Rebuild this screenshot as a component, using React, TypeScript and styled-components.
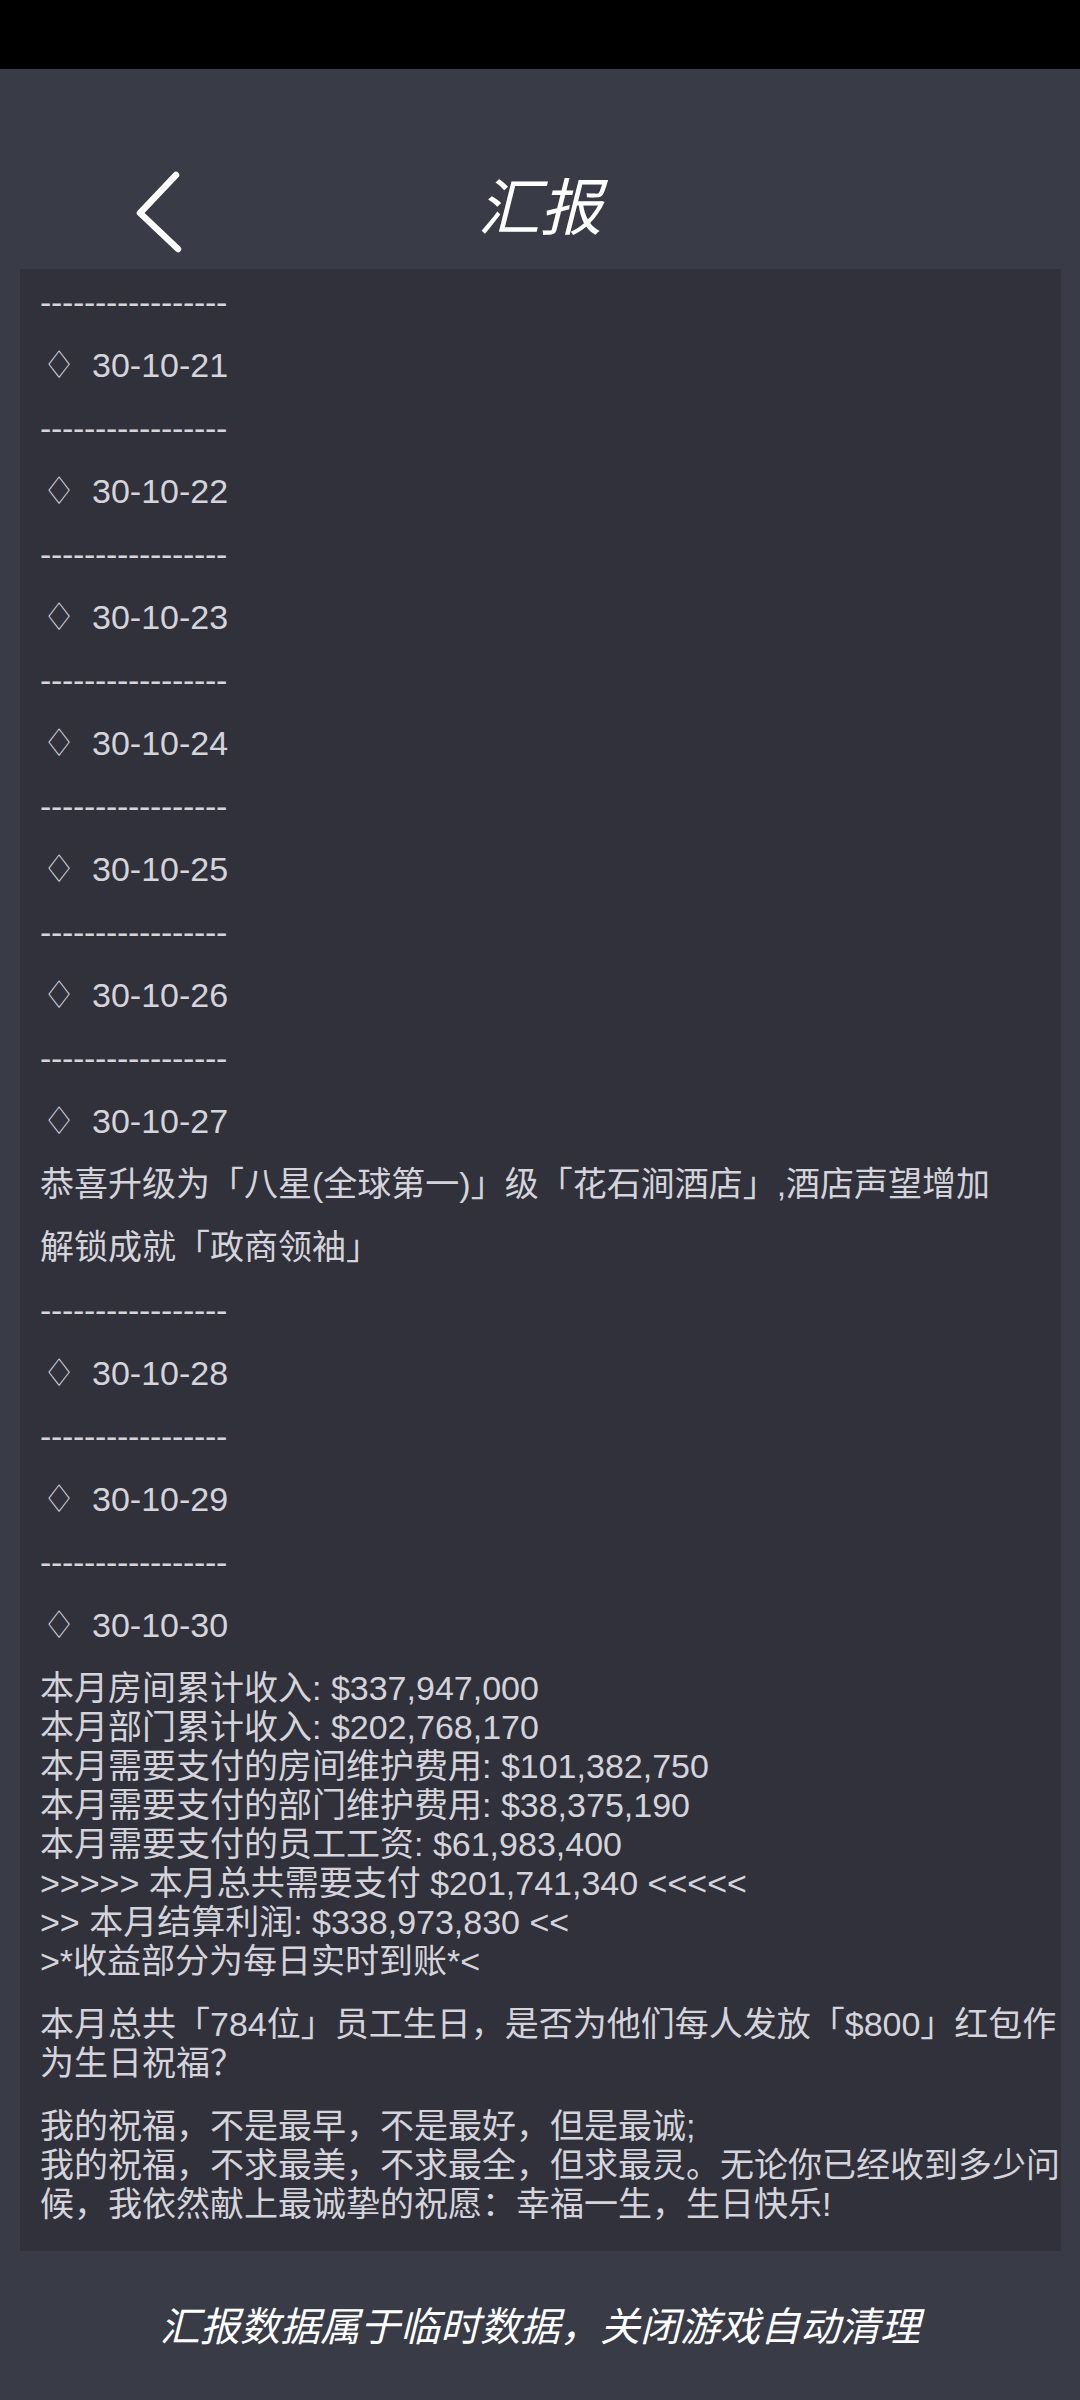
import * as React from 'react';
import styled, { createGlobalStyle } from 'styled-components';

const GlobalStyle = createGlobalStyle`
  html, body {
    margin: 0;
    padding: 0;
    background: #393c47;
  }
  body {
    font-family: "Liberation Sans", "Noto Sans CJK SC", sans-serif;
  }
`;

const dates = ['30-10-21', '30-10-22', '30-10-23', '30-10-24', '30-10-25', '30-10-26', '30-10-27'];

const summary = [
    '本月房间累计收入: $337,947,000',
    '本月部门累计收入: $202,768,170',
    '本月需要支付的房间维护费用: $101,382,750',
    '本月需要支付的部门维护费用: $38,375,190',
    '本月需要支付的员工工资: $61,983,400',
    '>>>>> 本月总共需要支付 $201,741,340 <<<<<',
    '>> 本月结算利润: $338,973,830 <<',
    '>*收益部分为每日实时到账*<',
];

const DASHES = '-----------------';

const DayHeader: React.FC<{ date: string }> = ({ date }) => (
    <>
        <Dashes>{DASHES}</Dashes>
        <Entry>
            <Diamond>♢</Diamond>
            {date}
        </Entry>
    </>
);

const App: React.FC = () => {
    return (
        <Screen>
            <GlobalStyle />
            <StatusBar />
            <Header>
                <BackButton aria-label="back">
                    <svg width="50" height="86" viewBox="0 0 50 86" fill="none">
                        <path d="M42 6 L6 44 L44 80" stroke="#fff" strokeWidth="6.5" strokeLinecap="round" strokeLinejoin="round" />
                    </svg>
                </BackButton>
                <Title>汇报</Title>
                <span />
            </Header>

            <Panel>
                {dates.map((d) => (
                    <DayHeader key={d} date={d} />
                ))}
                <Entry>恭喜升级为「八星(全球第一)」级「花石涧酒店」,酒店声望增加</Entry>
                <Entry>解锁成就「政商领袖」</Entry>
                <DayHeader date="30-10-28" />
                <DayHeader date="30-10-29" />
                <DayHeader date="30-10-30" />
                <Entry>
                    {summary.map((line) => (
                        <div key={line}>{line}</div>
                    ))}
                </Entry>
                <Entry>本月总共「784位」员工生日，是否为他们每人发放「$800」红包作为生日祝福？</Entry>
                <Entry>
                    我的祝福，不是最早，不是最好，但是最诚;
                    <br />
                    我的祝福，不求最美，不求最全，但求最灵。无论你已经收到多少问候，我依然献上最诚挚的祝愿：幸福一生，生日快乐!
                </Entry>
            </Panel>

            <Footer>汇报数据属于临时数据，关闭游戏自动清理</Footer>
        </Screen>
    );
};

const Screen = styled.div`
    width: 1080px;
    min-height: 2400px;
    background: #393c47;
    display: flex;
    flex-direction: column;
`;

const StatusBar = styled.div`
    height: 69px;
    background: #000;
`;

const Header = styled.div`
    height: 124px;
    padding-top: 76px;
    display: grid;
    grid-template-columns: 1fr auto 1fr;
    align-items: center;
`;

const BackButton = styled.button`
    background: none;
    border: none;
    padding: 0 0 0 134px;
    display: flex;
    align-items: center;
    justify-self: start;
    margin-top: 10px;
`;

const Title = styled.h1`
    margin: 4px 0 0;
    color: #fff;
    font-size: 62px;
    font-weight: 400;
    font-style: italic;
    line-height: 1;
`;

const Panel = styled.div`
    margin: 0 19px 0 20px;
    padding: 14px 0 27px 20px;
    background: #31313c;
    display: flex;
    flex-direction: column;
    gap: 24px;
    color: #d4d4da;
    font-size: 34px;
    line-height: 39px;
`;

const Entry = styled.div`
    display: block;
`;

const Dashes = styled.div`
    letter-spacing: -0.33px;
`;

const Diamond = styled.span`
    display: inline-block;
    font-family: "DejaVu Sans", sans-serif;
    font-size: 38px;
    line-height: 39px;
    width: 50px;
    padding-left: 2px;
    vertical-align: top;
    font-weight: 300;
`;

const Footer = styled.div`
    padding-top: 53px;
    text-align: center;
    color: #fff;
    font-size: 40px;
    line-height: 46px;
    font-style: italic;
`;

export default App;
